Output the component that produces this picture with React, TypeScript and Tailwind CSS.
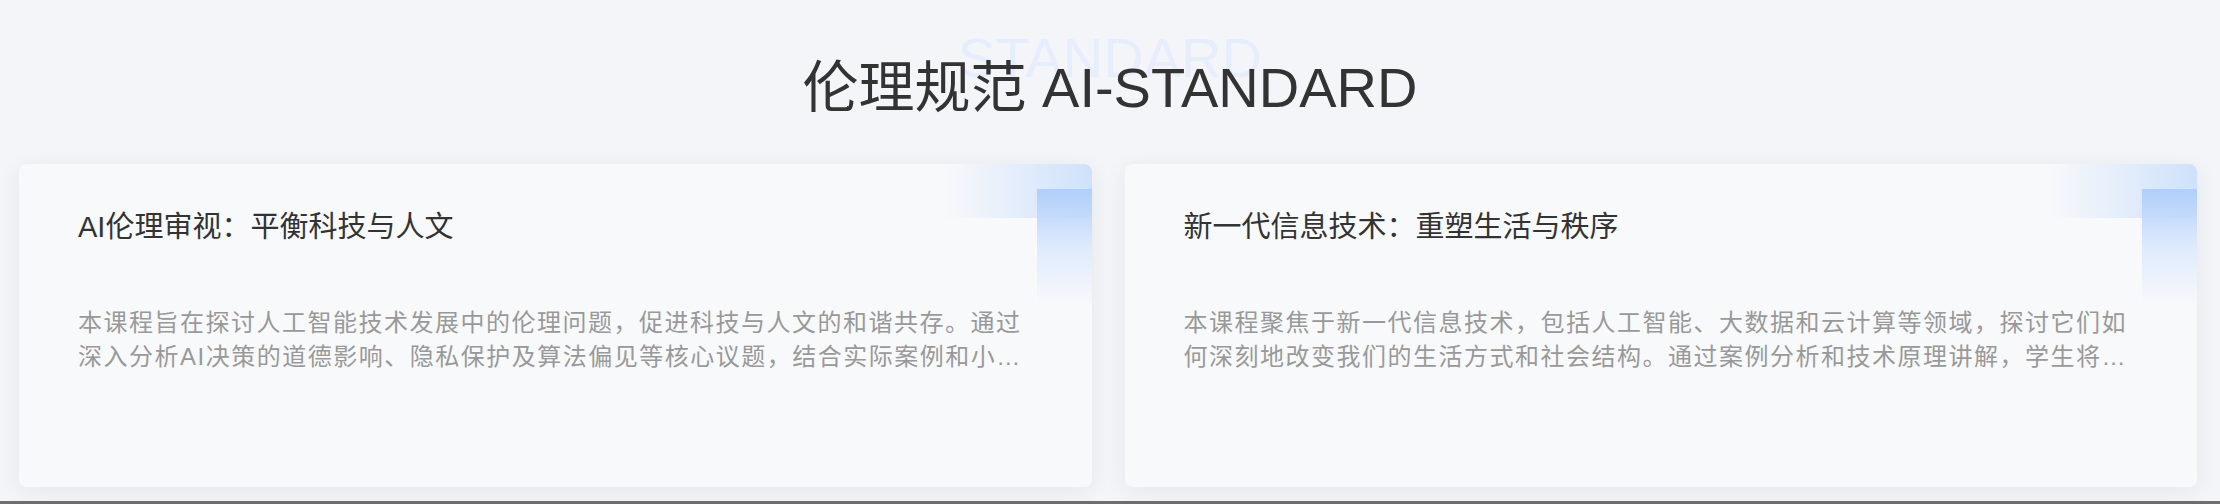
import React from 'react';

type Course = {
  title: string;
  summary: string;
};

const courses: Course[] = [
  {
    title: 'AI伦理审视：平衡科技与人文',
    summary:
      '本课程旨在探讨人工智能技术发展中的伦理问题，促进科技与人文的和谐共存。通过深入分析AI决策的道德影响、隐私保护及算法偏见等核心议题，结合实际案例和小组讨论，帮助学生建立负责任的技术观。',
  },
  {
    title: '新一代信息技术：重塑生活与秩序',
    summary:
      '本课程聚焦于新一代信息技术，包括人工智能、大数据和云计算等领域，探讨它们如何深刻地改变我们的生活方式和社会结构。通过案例分析和技术原理讲解，学生将理解技术变革背后的逻辑与影响。',
  },
];

function CourseCard({ course }: { course: Course }) {
  return (
    <div className="relative h-[323px] overflow-hidden rounded-lg bg-[#f8f9fb] pl-[59px] pr-[58px] pt-[43px] shadow-[0_4px_22px_rgba(30,40,70,0.07)]">
      {/* corner decoration */}
      <div className="pointer-events-none absolute right-0 top-0 h-[54px] w-[150px] bg-gradient-to-r from-[#dbe8fc]/0 to-[#cfe1fb]" />
      <div className="pointer-events-none absolute right-0 top-[25px] h-[118px] w-[55px] bg-gradient-to-b from-[#b0cffa] via-[#d9e7fc]/80 to-[#f8f9fb]/0" />

      <h3 className="relative text-[29px] leading-[40px] text-[#333333]">{course.title}</h3>
      <p className="relative mt-[59px] line-clamp-2 text-[24px] leading-[34px] tracking-[1.5px] text-[#999999]">
        {course.summary}
      </p>
    </div>
  );
}

export default function App() {
  return (
    <div
      className="h-[504px] border-b-[3px] border-[#6e6e6e] bg-[#f4f5f8]"
      style={{ fontFamily: '"Liberation Sans", "Noto Sans CJK SC", sans-serif' }}
    >
      <div className="relative pt-[56px] text-center">
        <span className="pointer-events-none absolute left-0 right-0 top-[26px] select-none text-[56px] leading-[64px] text-[#e6eefd]">
          STANDARD
        </span>
        <h2 className="relative text-[56px] leading-[64px] text-[#333333]">伦理规范 AI-STANDARD</h2>
      </div>

      <div className="mt-[44px] grid grid-cols-2 gap-[33px] pl-[19px] pr-[23px]">
        {courses.map((c) => (
          <CourseCard key={c.title} course={c} />
        ))}
      </div>
    </div>
  );
}
